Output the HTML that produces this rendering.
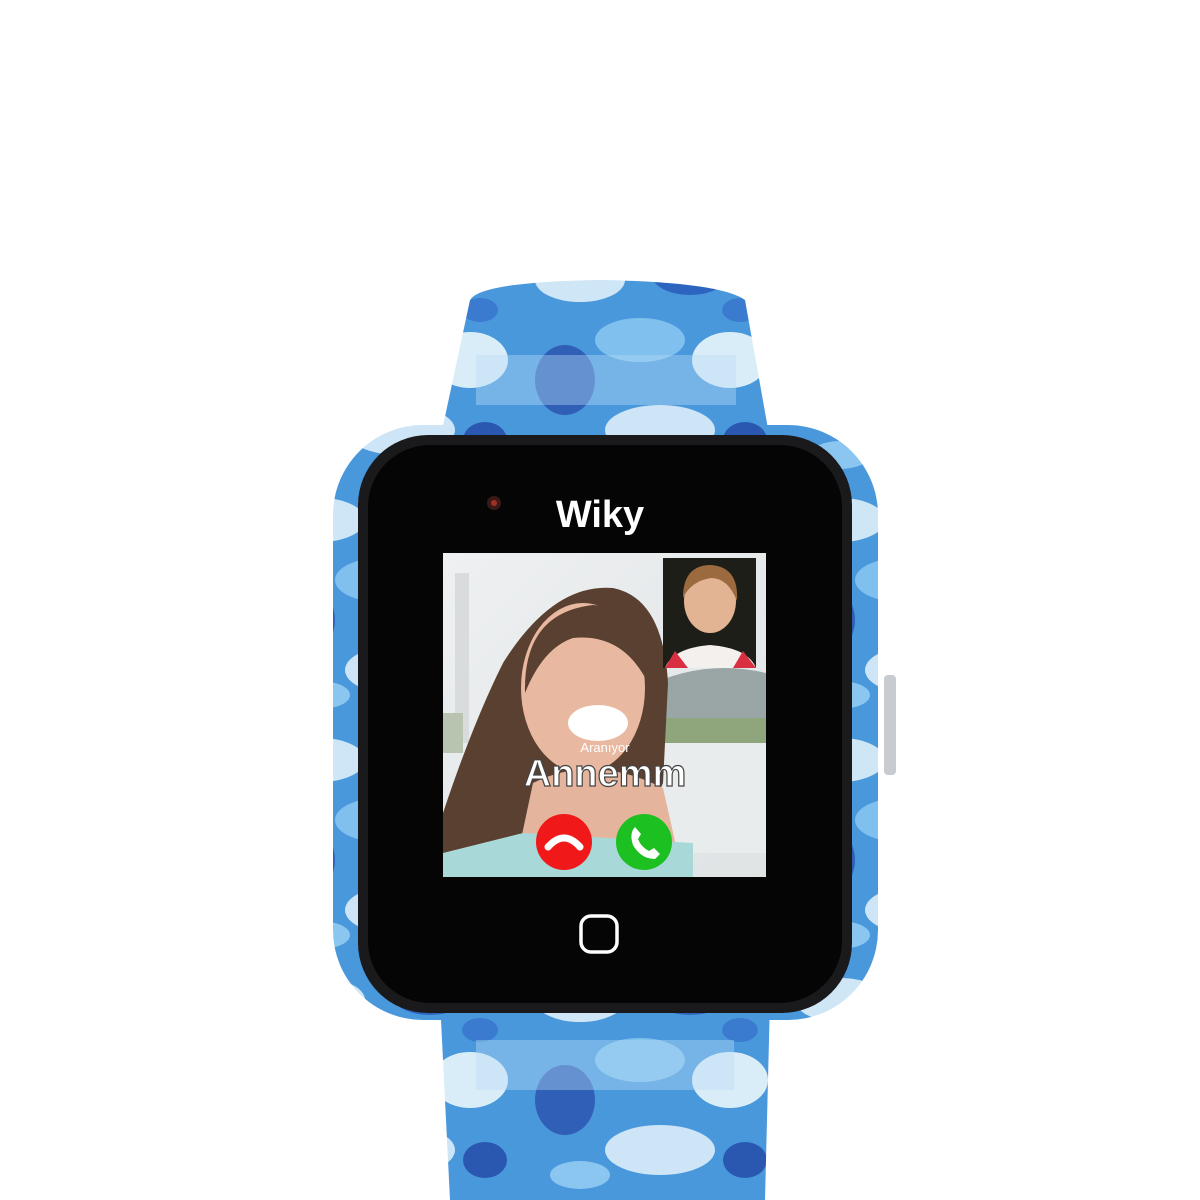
<!DOCTYPE html>
<html><head><style>
html,body{margin:0;padding:0;background:#fff;width:1200px;height:1200px;overflow:hidden}
</style></head><body>
<svg width="1200" height="1200" viewBox="0 0 1200 1200" xmlns="http://www.w3.org/2000/svg">
<defs>
<pattern id="camo" patternUnits="userSpaceOnUse" width="260" height="240">
<rect width="260" height="240" fill="#4a98dc"/>
<ellipse cx="60" cy="40" rx="45" ry="22" fill="#cfe6f7"/>
<ellipse cx="170" cy="35" rx="38" ry="20" fill="#2c64c0"/>
<ellipse cx="120" cy="100" rx="45" ry="22" fill="#7fc0ee"/>
<ellipse cx="210" cy="120" rx="38" ry="28" fill="#d9edf9"/>
<ellipse cx="45" cy="140" rx="30" ry="35" fill="#2f5fb7"/>
<ellipse cx="140" cy="190" rx="55" ry="25" fill="#cde5f6"/>
<ellipse cx="225" cy="200" rx="22" ry="18" fill="#2a58b0"/>
<ellipse cx="60" cy="215" rx="30" ry="14" fill="#8ac6ef"/>
<ellipse cx="220" cy="70" rx="18" ry="12" fill="#3a7bd0"/>
</pattern>
<linearGradient id="bg" x1="0" y1="0" x2="1" y2="1">
<stop offset="0" stop-color="#eef0f2"/><stop offset="1" stop-color="#dfe3e4"/></linearGradient>
</defs>
<path d="M470 300 Q480 282 600 280 Q720 282 745 300 L770 440 L440 440 Z" fill="url(#camo)"/>
<rect x="476" y="355" width="260" height="50" fill="#b8dcf4" opacity="0.4"/>
<path d="M440 1000 L770 1000 L765 1200 L450 1200 Z" fill="url(#camo)"/>
<rect x="476" y="1040" width="258" height="50" fill="#b8dcf4" opacity="0.4"/>
<rect x="333" y="425" width="545" height="595" rx="90" fill="url(#camo)"/>
<rect x="884" y="675" width="12" height="100" rx="4" fill="#c8ccd0"/>
<rect x="358" y="435" width="494" height="578" rx="70" fill="#1a1a1c"/>
<rect x="368" y="445" width="474" height="558" rx="62" fill="#050505"/>
<circle cx="494" cy="503" r="7" fill="#3a1a18"/><circle cx="494" cy="503" r="3" fill="#a03020"/>
<text x="600" y="527" text-anchor="middle" font-family="Liberation Sans, sans-serif" font-weight="bold" font-size="38" fill="#fff">Wiky</text>
<rect x="581" y="916" width="36" height="36" rx="10" fill="none" stroke="#fff" stroke-width="3.5"/>
<svg x="443" y="553" width="323" height="324" viewBox="0 0 323 324">
<rect width="323" height="324" fill="url(#bg)"/>
<rect x="12" y="20" width="14" height="170" fill="#d8dcdd"/>
<path d="M200 135 Q260 105 323 120 L323 190 L200 190 Z" fill="#9aa6a6"/>
<rect x="200" y="165" width="123" height="30" fill="#8fa57c"/>
<rect x="210" y="190" width="113" height="110" fill="#e8ecec"/>
<rect x="0" y="160" width="20" height="40" fill="#b8c4b0"/>
<path d="M0 320 L0 260 Q30 170 60 110 Q110 30 170 35 Q220 45 225 130 L220 230 L180 324 Z" fill="#5a4030"/>
<ellipse cx="140" cy="135" rx="62" ry="85" fill="#e8b8a0"/>
<path d="M82 140 Q80 60 150 52 Q205 55 205 130 Q180 80 130 85 Q100 95 82 140Z" fill="#5a4030"/>
<ellipse cx="155" cy="170" rx="30" ry="18" fill="#fff"/>
<path d="M90 230 Q150 200 220 235 L240 324 L70 324 Z" fill="#e4b49c"/>
<path d="M0 300 L80 280 L250 290 L250 324 L0 324Z" fill="#a8d8d8"/>
<rect x="220" y="5" width="93" height="110" fill="#1e1e18"/>
<ellipse cx="267" cy="48" rx="26" ry="32" fill="#e2b494"/>
<path d="M240 45 Q240 12 268 12 Q296 14 294 48 Q285 25 268 25 Q248 28 240 45Z" fill="#9b6a3e"/>
<path d="M222 115 Q230 95 267 92 Q305 95 313 115Z" fill="#f4f0ee"/>
<path d="M222 115 L232 98 L245 115Z M313 115 L300 98 L290 115Z" fill="#d83040"/>
<text x="162" y="199" text-anchor="middle" font-family="Liberation Sans, sans-serif" font-size="13" fill="#fff">Aranıyor</text>
<text x="162" y="233" text-anchor="middle" font-family="Liberation Sans, sans-serif" font-weight="bold" font-size="38" fill="#fff" stroke="#444" stroke-width="1.2">Annemm</text>
<circle cx="121" cy="289" r="28" fill="#f01818"/>
<path d="M105 294 Q121 276 137 294" fill="none" stroke="#fff" stroke-width="7" stroke-linecap="round"/>
<circle cx="201" cy="289" r="28" fill="#1cc020"/>
<path d="M192 274 L198 281 L195 286 Q198 294 206 298 L211 295 L217 301 L212 306 Q198 306 190 292 Q186 280 192 274Z" fill="#fff"/>
</svg>
</svg>
</body></html>
